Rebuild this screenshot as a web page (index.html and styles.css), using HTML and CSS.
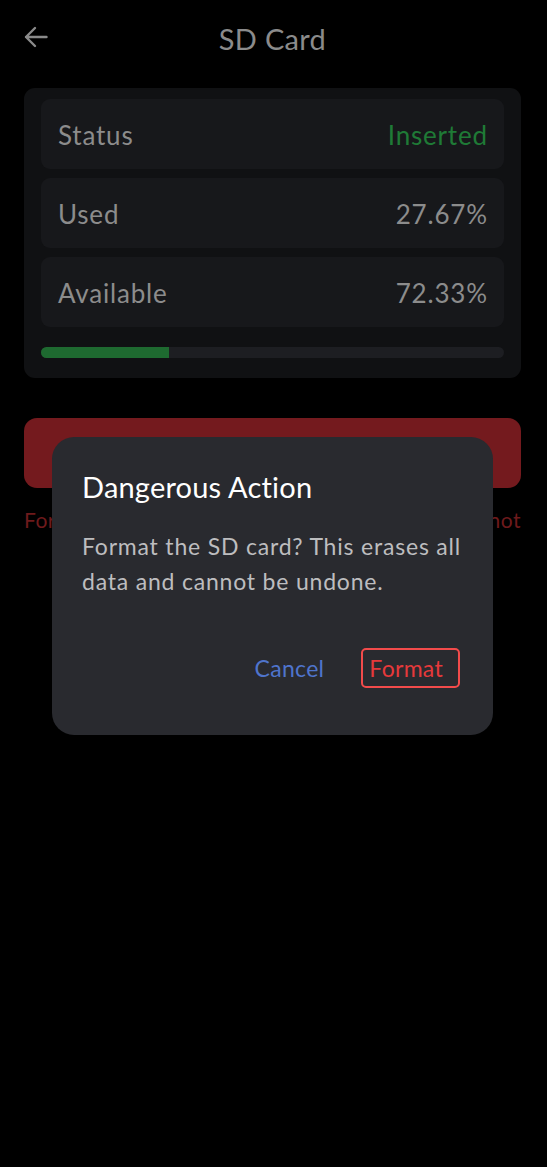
FILE: index.html
```html
<!DOCTYPE html>
<html lang="en">
<head>
<meta charset="utf-8">
<title>SD Card</title>
<link rel="stylesheet" href="styles.css">
</head>
<body>
<div class="screen">
  <header class="topbar">
    <button class="back" aria-label="Back">
      <svg width="24" height="22" viewBox="0 0 24 22" fill="none" stroke="#8a8a8a" stroke-width="2.4" stroke-linecap="round" stroke-linejoin="round"><path d="M22.5 11H2M11 2L2 11l9 9"/></svg>
    </button>
    <h1 class="title">SD Card</h1>
  </header>

  <section class="card">
    <div class="row"><span class="label">Status</span><span class="value ok">Inserted</span></div>
    <div class="row"><span class="label">Used</span><span class="value">27.67%</span></div>
    <div class="row"><span class="label">Available</span><span class="value">72.33%</span></div>
    <div class="bar"><div class="fill" style="width:27.67%"></div></div>
  </section>

  <button class="danger">Format SD Card</button>
  <p class="warn">Formatting erases all data on the card and cannot be undone.</p>
</div>

<div class="overlay">
  <div class="dialog" role="dialog">
    <h2 class="dlg-title">Dangerous Action</h2>
    <p class="dlg-body">Format the SD card? This erases all data and cannot be undone.</p>
    <div class="dlg-actions">
      <button class="btn-cancel">Cancel</button>
      <button class="btn-format">Format</button>
    </div>
  </div>
</div>
</body>
</html>
```
FILE: styles.css
```css
* { box-sizing: border-box; }
html, body {
  margin: 0;
  padding: 0;
  background: #000;
  width: 547px;
  height: 1167px;
  overflow: hidden;
  font-family: Lato, "Noto Sans", sans-serif;
}
button { font-family: inherit; border: none; background: none; padding: 0; margin: 0; cursor: pointer; }
.screen { padding: 0 26px 0 24px; }
.topbar {
  position: relative;
  height: 77px;
  display: flex;
  align-items: center;
  justify-content: center;
}
.back {
  position: absolute;
  left: 0;
  top: 26px;
  width: 24px;
  height: 22px;
  display: flex;
}
.title {
  margin: 0;
  font-size: 29px;
  font-weight: 400;
  color: #8b8b8b;
  letter-spacing: 0.3px;
}
.card {
  margin-top: 11px;
  background: #101113;
  border-radius: 11px;
  padding: 11px 17px 20px 17px;
  display: flex;
  flex-direction: column;
  gap: 9px;
}
.row {
  height: 70px;
  background: #17181b;
  border-radius: 9px;
  display: flex;
  align-items: center;
  justify-content: space-between;
  padding: 2px 17px 0;
  font-size: 26px;
  letter-spacing: 0.8px;
  color: #8c8c8c;
}
.value { margin-right: -0.8px; }
.value.ok { color: #1f7a36; }
.bar {
  margin-top: 11px;
  height: 11px;
  border-radius: 6px;
  background: #1d1e22;
  overflow: hidden;
}
.fill { height: 100%; background: #1e6a30; }
.danger {
  display: block;
  width: 100%;
  margin-top: 40px;
  height: 70px;
  border-radius: 13px;
  background: #741a1e;
  color: #9a9a9a;
  font-size: 22px;
}
.warn {
  margin: 18px 0 0;
  font-size: 21px;
  line-height: 28px;
  letter-spacing: 0.5px;
  color: #6e1a1c;
  text-align: justify;
  text-align-last: center;
}
.overlay {
  position: fixed;
  inset: 0;
  display: flex;
  align-items: center;
  justify-content: center;
  padding-top: 5px;
}
.dialog {
  width: 441px;
  background: #292a2f;
  border-radius: 22px;
  padding: 33px 30px 47px 30px;
  transform: translateX(-1px);
}
.dlg-title {
  margin: 0;
  font-size: 29px;
  font-weight: 400;
  color: #ffffff;
  line-height: 34px;
  letter-spacing: 0.2px;
}
.dlg-body {
  margin: 25px 0 0;
  font-size: 23px;
  line-height: 35px;
  letter-spacing: 0.8px;
  color: #bdbdbf;
}
.dlg-actions {
  margin-top: 49px;
  display: flex;
  justify-content: flex-end;
  align-items: center;
  gap: 37px;
  padding-right: 3px;
}
.btn-cancel {
  font-size: 23px;
  color: #4f74cc;
  line-height: 40px;
  letter-spacing: 0.3px;
}
.btn-format {
  font-size: 23px;
  color: #e6393b;
  line-height: 35px;
  height: 40px;
  letter-spacing: 0.3px;
  padding: 0 15px 0 6px;
  border: 2.5px solid #f24b4b;
  border-radius: 5px;
}
```
